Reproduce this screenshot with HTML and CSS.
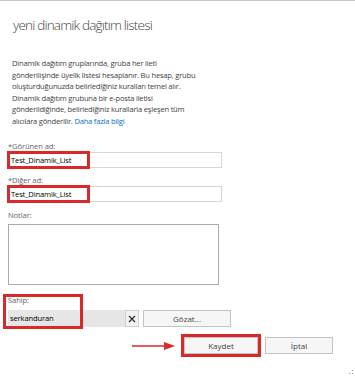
FILE: index.html
```html
<!DOCTYPE html>
<html lang="tr">
  <head>
    <meta charset="UTF-8">
    <title>yeni dinamik dağıtım listesi</title>
    <link rel="stylesheet" href="styles.css">
  </head>
  <body>
    <div class="dialog">
      <h1 class="title">yeni dinamik dağıtım listesi</h1>
      <p class="intro">Dinamik dağıtım gruplarında, gruba her ileti<br>gönderilişinde üyelik listesi hesaplanır. Bu hesap, grubu<br>oluşturduğunuzda belirlediğiniz kuralları temel alır.<br>Dinamik dağıtım grubuna bir e-posta iletisi<br>gönderildiğinde, belirlediğiniz kurallarla eşleşen tüm<br>alıcılara gönderilir. <a href="#" class="link">Daha fazla bilgi</a></p>

      <label class="label label-first">*Görünen ad:</label>
      <div class="input-wrap">
        <div class="input">Test_Dinamik_List</div>
        <span class="mark mark-input"></span>
      </div>

      <label class="label label-alias">*Diğer ad:</label>
      <div class="input-wrap">
        <div class="input">Test_Dinamik_List</div>
        <span class="mark mark-input"></span>
      </div>

      <label class="label label-notes">Notlar:</label>
      <div class="notes"></div>

      <div class="owner">
        <label class="label">Sahip:</label>
        <div class="owner-row">
          <div class="owner-field">serkanduran</div>
          <div class="owner-clear">
            <svg width="8" height="8" viewBox="0 0 8 8"><path d="M1 1 L7 7 M7 1 L1 7" stroke="#333" stroke-width="1.4"/></svg>
          </div>
          <button class="btn btn-browse">Gözat...</button>
        </div>
        <span class="mark mark-owner"></span>
      </div>

      <div class="actions">
        <svg class="arrow" width="44" height="10" viewBox="0 0 44 10"><path d="M0 5 H34" stroke="#d9292b" stroke-width="1.6"/><path d="M32 1 L43 5 L32 9 Z" fill="#d9292b"/></svg>
        <button class="btn btn-save">Kaydet</button>
        <button class="btn btn-cancel">İptal</button>
      </div>
    </div>
    <svg class="grip" width="6" height="6" viewBox="0 0 6 6"><rect x="4" y="1" width="1" height="1" fill="#999"/><rect x="4" y="4" width="1" height="1" fill="#999"/><rect x="1" y="4" width="1" height="1" fill="#999"/></svg>
  </body>
</html>
```

FILE: styles.css
```css
body {
  margin: 0;
  background: #fff;
  font-family: "Open Sans", "Noto Sans", sans-serif;
}
.dialog {
  height: 377px;
  border-top: 1px solid #c8c8c8;
  padding: 0 0 0 8px;
}
.title {
  margin: 14px 0 0 5px;
  font-size: 13.5px;
  font-weight: 300;
  letter-spacing: -0.8px;
  line-height: 20px;
  color: #444;
}
.intro {
  margin: 23px 0 0 4px;
  font-size: 7.6px;
  letter-spacing: -0.22px;
  line-height: 11.5px;
  color: #444;
}
.link {
  color: #0072c6;
  text-decoration: none;
}
.label {
  display: block;
  height: 11px;
  font-size: 7.6px;
  letter-spacing: -0.1px;
  line-height: 11px;
  color: #666;
}
.label-first {
  margin-top: 14px;
}
.label-alias {
  margin-top: 7px;
}
.label-notes {
  margin-top: 8px;
  margin-bottom: 3px;
}
.input-wrap {
  position: relative;
  width: 214px;
}
.input {
  box-sizing: border-box;
  height: 16px;
  border: 1px solid #d6d6d6;
  padding-left: 2px;
  font-size: 7.6px;
  letter-spacing: -0.15px;
  line-height: 14px;
  color: #000;
}
.mark {
  position: absolute;
  box-sizing: border-box;
  border: 3px solid #d9292b;
}
.mark-input {
  left: -1px;
  top: -1px;
  width: 83px;
  height: 18px;
}
.notes {
  box-sizing: border-box;
  width: 211px;
  height: 61px;
  border: 1px solid #ababab;
}
.owner {
  position: relative;
  margin-top: 10px;
}
.owner-row {
  display: flex;
  align-items: stretch;
  height: 17px;
  margin-top: 4px;
}
.owner-field {
  box-sizing: border-box;
  width: 117px;
  padding-left: 2px;
  background: #e6e6e6;
  font-size: 7.6px;
  letter-spacing: -0.15px;
  line-height: 17px;
  color: #000;
}
.owner-clear {
  box-sizing: border-box;
  width: 14px;
  display: flex;
  align-items: center;
  justify-content: center;
  background: #f2f2f2;
  border: 1px solid #d0d0d0;
}
.mark-owner {
  left: -5px;
  top: -1px;
  width: 80px;
  height: 35px;
}
.btn {
  box-sizing: border-box;
  height: 17px;
  padding: 0;
  border: 1px solid #c4c4c4;
  background: #f6f6f6;
  font-family: inherit;
  font-size: 8px;
  color: #444;
}
.btn-browse {
  width: 88px;
  margin-left: 4px;
}
.actions {
  display: flex;
  align-items: center;
  margin-top: 10px;
  padding-left: 124px;
}
.arrow {
  margin-right: 8px;
}
.btn-save {
  width: 74px;
  outline: 3px solid #d9292b;
}
.btn-cancel {
  width: 68px;
  margin-left: 7px;
}
.grip {
  position: absolute;
  left: 348px;
  top: 369px;
}
```
